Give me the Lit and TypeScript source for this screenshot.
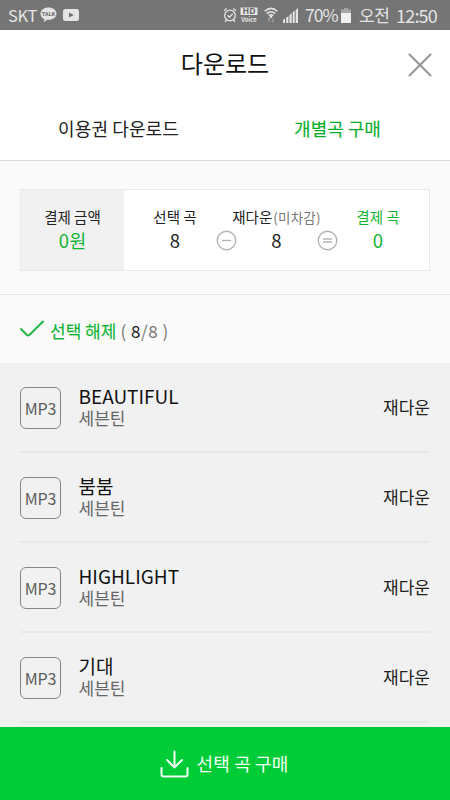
import { LitElement, html, svg, css } from 'lit';
import { customElement, property, state } from 'lit/decorators.js';

interface Track {
  title: string;
  artist: string;
  status: string;
}

const TRACKS: Track[] = [
  { title: 'BEAUTIFUL', artist: '세븐틴', status: '재다운' },
  { title: '붐붐', artist: '세븐틴', status: '재다운' },
  { title: 'HIGHLIGHT', artist: '세븐틴', status: '재다운' },
  { title: '기대', artist: '세븐틴', status: '재다운' },
];

/** Phone status bar: carrier, notifications, signal, battery and clock. */
@customElement('status-bar')
class StatusBar extends LitElement {
  static styles = css`
    :host {
      display: flex;
      align-items: center;
      height: 30px;
      padding: 0 12px 0 8px;
      box-sizing: border-box;
      background: #757575;
      color: #e4e4e4;
      font-size: 17px;
      line-height: 30px;
      white-space: nowrap;
    }

    svg { display: block; flex: none; }
    .carrier { width: 32px; font-size: 16.5px; letter-spacing: -0.4px; }
    .talk { margin-right: 6px; }
    .spacer { flex: 1; }
    .alarm { margin-right: 3px; }
    .hd { margin-right: 6px; }
    .wifi { margin-right: 5px; }
    .signal { margin-right: 7px; }
    .percent { width: 34px; font-size: 17.5px; letter-spacing: -0.9px; }
    .battery { margin: 0 8px 0 2px; }
    .meridiem { width: 37px; font-size: 17px; letter-spacing: -0.4px; }
    .clock { width: 42px; font-size: 18px; letter-spacing: -0.8px; }
    .tiny { font-weight: 700; }
  `;

  render() {
    return html`
      <span class="carrier">SKT</span>
      <svg class="talk" width="17" height="16" viewBox="0 0 17 16">
        <path d="M8.5 .6C4 .6.5 3.2.5 6.8c0 2.5 1.5 4.4 4 5.4l-.7 3 3.4-2.4h1.3c4.5 0 8-2.4 8-6S13 .6 8.5.6Z" fill="#e4e4e4"/>
        <text class="tiny" x="8.5" y="8.8" font-size="5.4" text-anchor="middle" fill="#666">TALK</text>
      </svg>
      <svg width="16" height="12" viewBox="0 0 16 12">
        <rect width="16" height="12" rx="2.5" fill="#e4e4e4"/>
        <path d="M6 3.6v5L10.8 6Z" fill="#707070"/>
      </svg>
      <span class="spacer"></span>
      <svg class="alarm" width="14" height="16" viewBox="0 0 14 16" fill="none" stroke="#e4e4e4" stroke-width="1.3">
        <circle cx="7" cy="8.5" r="5.3"/>
        <path d="m4.5 8.2 2 2 3.2-3.5M1 3.8 3.7 1.4M13 3.8l-2.7-2.4M3.4 13l-1.3 1.8M10.6 13l1.3 1.8"/>
      </svg>
      <svg class="hd" width="18" height="16" viewBox="0 0 18 16" overflow="visible">
        <rect x="0.5" y="0.5" width="17" height="7.5" fill="#e4e4e4"/>
        <text class="tiny" x="9" y="6.9" font-size="7.4" textLength="13" lengthAdjust="spacingAndGlyphs" text-anchor="middle" fill="#666">HD</text>
        <text class="tiny" x="9" y="14.8" font-size="6" text-anchor="middle" fill="#e4e4e4">Voice</text>
      </svg>
      <svg class="wifi" width="14" height="16" viewBox="0 0 14 16" fill="none" stroke="#e4e4e4" stroke-width="1.5">
        <path d="M.6 4.200Q7-1.400 13.400 4.200M2.700 6.600Q7 3 11.300 6.600M4.800 8.700Q7 7 9.200 8.700"/>
        <circle cx="7" cy="9.700" r=".6" fill="#e4e4e4"/>
        <path d="M5 15v-4M3.700 12.300 5 11l1.300 1.300M9 11v4M7.700 13.700 9 15l1.300-1.300" stroke="#a2a2a2" stroke-width="1"/>
      </svg>
      <svg class="signal" width="15" height="15" viewBox="0 0 15 15" fill="#e4e4e4">
        <path d="M0 15v-3l2-1.400V15ZM3.200 15V9.600l2.200-1.400V15ZM6.500 15V6.900L8.700 5v10ZM9.700 15V4.300l2-1.700V15ZM12.700 15V2L15 0v15Z"/>
      </svg>
      <span class="percent">70%</span>
      <svg class="battery" width="10" height="15" viewBox="0 0 10 15">
        <path d="M3 0h4v1.500h3V15H0V1.500h3Z" fill="#a5a5a5"/>
        <path d="M0 5h10v10H0Z" fill="#f0f0f0"/>
      </svg>
      <span class="meridiem">오전</span>
      <span class="clock">12:50</span>
    `;
  }
}

/** Payment box: the amount on the left, the song arithmetic on the right. */
@customElement('payment-summary')
class PaymentSummary extends LitElement {
  @property({ type: Number }) selected = 0;
  @property({ type: Number }) redownload = 0;
  @property({ type: Number }) price = 0;

  static styles = css`
    :host {
      display: flex;
      height: 82px;
      box-sizing: border-box;
      border: 1px solid #e9e9e9;
      background: #fff;
      color: #222;
      text-align: center;
      white-space: nowrap;
    }

    .cell {
      display: flex;
      flex-direction: column;
      padding-top: 15px;
      box-sizing: border-box;
      font-size: 14.5px;
    }

    .amount { width: 103px; background: #f1f1f1; }
    .formula { display: flex; flex: 1; }
    .selected { width: 102px; }
    .redown { width: 101px; }
    .due { flex: 1; }
    .label { line-height: 24px; }
    .value { font-size: 18.5px; line-height: 23px; }
    .green { color: #10b433; }
    .note { color: #777; font-size: 13.5px; letter-spacing: 0.2px; margin-left: 1px; }
    .op { width: 0; display: flex; justify-content: center; padding-top: 40px; }
    .op svg { flex: none; display: block; }
  `;

  _operator(path: string) {
    return html`
      <span class="op">
        <svg width="21" height="21" viewBox="0 0 21 21" fill="none" stroke="#b5b5b5" stroke-width="1.4">
          <circle cx="10.500" cy="10.500" r="9.300"/>
          ${svg`<path d=${path}/>`}
        </svg>
      </span>
    `;
  }

  render() {
    return html`
      <div class="cell amount">
        <span class="label">결제 금액</span>
        <span class="value green">${this.price}원</span>
      </div>
      <div class="formula">
        <div class="cell selected">
          <span class="label">선택 곡</span>
          <span class="value">${this.selected}</span>
        </div>
        ${this._operator('M6 10.500h9')}
        <div class="cell redown">
          <span class="label">재다운<span class="note">(미차감)</span></span>
          <span class="value">${this.redownload}</span>
        </div>
        ${this._operator('M6 9h9M6 12h9')}
        <div class="cell due green">
          <span class="label">결제 곡</span>
          <span class="value">${this.selected - this.redownload}</span>
        </div>
      </div>
    `;
  }
}

/** One song of the download list. */
@customElement('track-row')
class TrackRow extends LitElement {
  @property({ attribute: false }) track!: Track;

  static styles = css`
    :host {
      display: flex;
      height: 90px;
      box-sizing: border-box;
      border-bottom: 2px solid #e8e8e8;
      white-space: nowrap;
    }

    .badge {
      width: 41px;
      height: 42px;
      margin-top: 24px;
      box-sizing: border-box;
      border: 1.5px solid #868686;
      border-radius: 6px;
      color: #5c5c5c;
      font-size: 16px;
      line-height: 41px;
      letter-spacing: -0.2px;
      text-align: center;
    }

    .info { flex: 1; margin: 21px 0 0 17.5px; }
    .title { color: #111; font-size: 19px; line-height: 24px; }
    .artist { color: #666; font-size: 17px; line-height: 20px; }
    .status { color: #222; font-size: 17px; line-height: 24px; margin-top: 32px; }
  `;

  render() {
    return html`
      <div class="badge">MP3</div>
      <div class="info">
        <div class="title">${this.track.title}</div>
        <div class="artist">${this.track.artist}</div>
      </div>
      <div class="status">${this.track.status}</div>
    `;
  }
}

@customElement('app-root')
class AppRoot extends LitElement {
  @state() private _tracks: Track[] = TRACKS;
  @state() private _count = 8;

  static styles = css`
    :host {
      display: flex;
      flex-direction: column;
      height: 100vh;
      overflow: hidden;
      background: #fafafa;
      color: #222;
      font-family: 'Noto Sans CJK KR', 'Noto Sans', sans-serif;
    }

    status-bar, header, nav, .select-all, .buy { flex: none; }

    header {
      display: grid;
      grid-template-columns: 1fr auto 1fr;
      align-items: center;
      height: 68px;
      padding: 0 17px;
      background: #fff;
    }

    h1 {
      grid-column: 2;
      margin: 0 0 2px;
      font-size: 24px;
      font-weight: 400;
      line-height: 34px;
      color: #111;
    }

    .close {
      justify-self: end;
      display: flex;
      margin-top: 2px;
      padding: 0;
      border: 0;
      background: none;
    }

    nav {
      display: flex;
      height: 62px;
      background: #fff;
      border-bottom: 1px solid #dedede;
    }

    .tab {
      width: 50%;
      font-size: 18px;
      line-height: 60px;
      text-align: center;
      box-sizing: border-box;
    }

    .tab.first { padding-left: 12px; letter-spacing: 0.1px; }
    .tab.active { color: #0bae2c; -webkit-text-stroke: 0.12px; }

    .summary { padding: 28px 20px 23px; border-bottom: 1px solid #e7e7e7; }

    .select-all {
      display: flex;
      align-items: center;
      height: 68px;
      padding: 3px 20px 0;
      box-sizing: border-box;
      font-size: 17px;
      white-space: pre;
    }

    .select-all svg { margin: 0 6px 3px 0; }
    .release { color: #10b433; -webkit-text-stroke: 0.12px; }
    .count { color: #777; margin-left: 4px; letter-spacing: 0.55px; }
    .count b { color: #222; font-weight: 400; }

    .tracks { flex: 1; min-height: 0; overflow: hidden; padding: 0 20px; background: #f1f1f1; }

    .buy {
      display: flex;
      align-items: center;
      justify-content: center;
      height: 73px;
      padding: 0 2px 0 0;
      border: 0;
      background: #00cc38;
      color: #f2fff5;
      font: 400 18px 'Noto Sans CJK KR', sans-serif;
    }

    .buy svg { margin: 0 8px 0 0; }
    .buy span { margin-bottom: 2px; letter-spacing: 0.15px; }
  `;

  render() {
    return html`
      <status-bar></status-bar>
      <header>
        <h1>다운로드</h1>
        <button class="close" aria-label="닫기">
          <svg width="26" height="26" viewBox="0 0 26 26" fill="none" stroke="#999" stroke-width="2.200" stroke-linecap="round">
            <path d="m2.500 2.500 21 21M23.500 2.500l-21 21"/>
          </svg>
        </button>
      </header>
      <nav>
        <div class="tab first">이용권 다운로드</div>
        <div class="tab active">개별곡 구매</div>
      </nav>
      <section class="summary">
        <payment-summary .selected=${this._count} .redownload=${this._count} .price=${0}></payment-summary>
      </section>
      <div class="select-all">
        <svg width="24" height="18" viewBox="0 0 24 18" fill="none" stroke="#22b544" stroke-width="2" stroke-linecap="round" stroke-linejoin="round">
          <path d="m1 9 6 6q1.200 1 2.400 0L23 1.500"/>
        </svg>
        <span class="release">선택 해제</span>
        <span class="count">( <b>${this._count}</b>/${this._count} )</span>
      </div>
      <div class="tracks">
        ${this._tracks.map((track) => html`<track-row .track=${track}></track-row>`)}
      </div>
      <button class="buy">
        <svg width="29" height="28" viewBox="0 0 29 28" fill="none" stroke="#f2fff5" stroke-width="2" stroke-linecap="round" stroke-linejoin="round">
          <path d="M14.500 1.500v16M7 10l7.500 7.500L22 10M1.500 18v6.500q0 2 2 2h22q2 0 2-2V18"/>
        </svg>
        <span>선택 곡 구매</span>
      </button>
    `;
  }
}
